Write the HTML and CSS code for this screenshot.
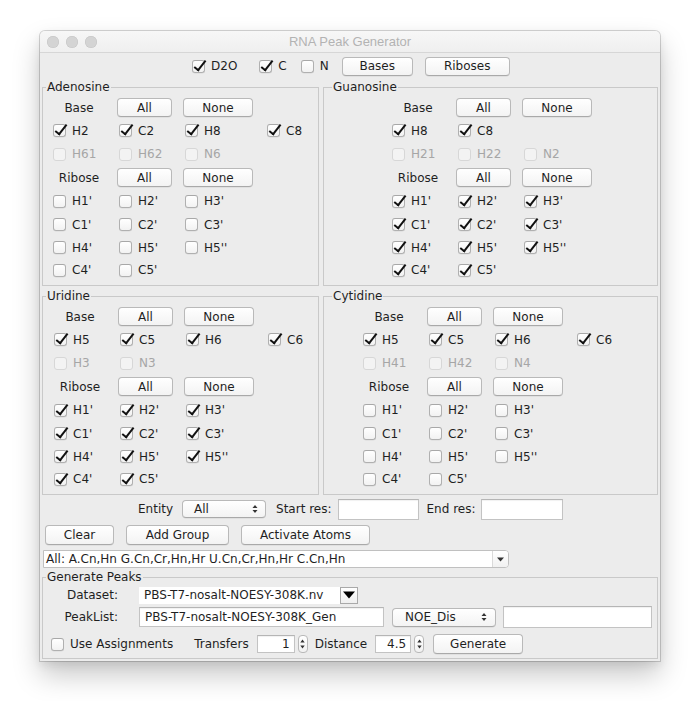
FILE: index.html
```html
<!DOCTYPE html>
<html>
<head>
<meta charset="utf-8">
<title>RNA Peak Generator</title>
<link rel="stylesheet" href="styles.css">
</head>
<body>
<div class="stage">
<div class="window">
  <div class="titlebar">
    <div class="lights"><span class="light"></span><span class="light"></span><span class="light"></span></div>
    <div class="title">RNA Peak Generator</div>
    <div></div>
  </div>
  <div class="content">
    <div class="toprow">
      <label class="chk d2o"><span class="cb on"></span>D2O</label>
      <label class="chk copt"><span class="cb on"></span>C</label>
      <label class="chk nopt"><span class="cb"></span>N</label>
      <button class="btn bases">Bases</button>
      <button class="btn riboses">Riboses</button>
    </div>

    <div class="panels">
      <fieldset class="panel">
        <legend>Adenosine</legend>
        <div class="grid pad-a">
          <div class="row"><span class="lbl">Base</span><button class="btn all">All</button><button class="btn none">None</button></div>
          <div class="row"><label class="chk"><span class="cb on"></span>H2</label><label class="chk"><span class="cb on"></span>C2</label><label class="chk"><span class="cb on"></span>H8</label><label class="chk"><span class="cb on"></span>C8</label></div>
          <div class="row"><label class="chk dis"><span class="cb"></span>H61</label><label class="chk dis"><span class="cb"></span>H62</label><label class="chk dis"><span class="cb"></span>N6</label></div>
          <div class="row"><span class="lbl">Ribose</span><button class="btn all">All</button><button class="btn none">None</button></div>
          <div class="row"><label class="chk"><span class="cb"></span>H1'</label><label class="chk"><span class="cb"></span>H2'</label><label class="chk"><span class="cb"></span>H3'</label></div>
          <div class="row"><label class="chk"><span class="cb"></span>C1'</label><label class="chk"><span class="cb"></span>C2'</label><label class="chk"><span class="cb"></span>C3'</label></div>
          <div class="row"><label class="chk"><span class="cb"></span>H4'</label><label class="chk"><span class="cb"></span>H5'</label><label class="chk"><span class="cb"></span>H5''</label></div>
          <div class="row"><label class="chk"><span class="cb"></span>C4'</label><label class="chk"><span class="cb"></span>C5'</label></div>
        </div>
      </fieldset>

      <fieldset class="panel right">
        <legend>Guanosine</legend>
        <div class="grid pad-g">
          <div class="row"><span class="lbl">Base</span><button class="btn all">All</button><button class="btn none">None</button></div>
          <div class="row"><label class="chk"><span class="cb on"></span>H8</label><label class="chk"><span class="cb on"></span>C8</label></div>
          <div class="row"><label class="chk dis"><span class="cb"></span>H21</label><label class="chk dis"><span class="cb"></span>H22</label><label class="chk dis"><span class="cb"></span>N2</label></div>
          <div class="row"><span class="lbl">Ribose</span><button class="btn all">All</button><button class="btn none">None</button></div>
          <div class="row"><label class="chk"><span class="cb on"></span>H1'</label><label class="chk"><span class="cb on"></span>H2'</label><label class="chk"><span class="cb on"></span>H3'</label></div>
          <div class="row"><label class="chk"><span class="cb on"></span>C1'</label><label class="chk"><span class="cb on"></span>C2'</label><label class="chk"><span class="cb on"></span>C3'</label></div>
          <div class="row"><label class="chk"><span class="cb on"></span>H4'</label><label class="chk"><span class="cb on"></span>H5'</label><label class="chk"><span class="cb on"></span>H5''</label></div>
          <div class="row"><label class="chk"><span class="cb on"></span>C4'</label><label class="chk"><span class="cb on"></span>C5'</label></div>
        </div>
      </fieldset>

      <fieldset class="panel">
        <legend>Uridine</legend>
        <div class="grid pad-u">
          <div class="row"><span class="lbl">Base</span><button class="btn all">All</button><button class="btn none">None</button></div>
          <div class="row"><label class="chk"><span class="cb on"></span>H5</label><label class="chk"><span class="cb on"></span>C5</label><label class="chk"><span class="cb on"></span>H6</label><label class="chk"><span class="cb on"></span>C6</label></div>
          <div class="row"><label class="chk dis"><span class="cb"></span>H3</label><label class="chk dis"><span class="cb"></span>N3</label></div>
          <div class="row"><span class="lbl">Ribose</span><button class="btn all">All</button><button class="btn none">None</button></div>
          <div class="row"><label class="chk"><span class="cb on"></span>H1'</label><label class="chk"><span class="cb on"></span>H2'</label><label class="chk"><span class="cb on"></span>H3'</label></div>
          <div class="row"><label class="chk"><span class="cb on"></span>C1'</label><label class="chk"><span class="cb on"></span>C2'</label><label class="chk"><span class="cb on"></span>C3'</label></div>
          <div class="row"><label class="chk"><span class="cb on"></span>H4'</label><label class="chk"><span class="cb on"></span>H5'</label><label class="chk"><span class="cb on"></span>H5''</label></div>
          <div class="row"><label class="chk"><span class="cb on"></span>C4'</label><label class="chk"><span class="cb on"></span>C5'</label></div>
        </div>
      </fieldset>

      <fieldset class="panel right">
        <legend>Cytidine</legend>
        <div class="grid pad-c">
          <div class="row"><span class="lbl">Base</span><button class="btn all">All</button><button class="btn none">None</button></div>
          <div class="row"><label class="chk"><span class="cb on"></span>H5</label><label class="chk"><span class="cb on"></span>C5</label><label class="chk"><span class="cb on"></span>H6</label><label class="chk"><span class="cb on"></span>C6</label></div>
          <div class="row"><label class="chk dis"><span class="cb"></span>H41</label><label class="chk dis"><span class="cb"></span>H42</label><label class="chk dis"><span class="cb"></span>N4</label></div>
          <div class="row"><span class="lbl">Ribose</span><button class="btn all">All</button><button class="btn none">None</button></div>
          <div class="row"><label class="chk"><span class="cb"></span>H1'</label><label class="chk"><span class="cb"></span>H2'</label><label class="chk"><span class="cb"></span>H3'</label></div>
          <div class="row"><label class="chk"><span class="cb"></span>C1'</label><label class="chk"><span class="cb"></span>C2'</label><label class="chk"><span class="cb"></span>C3'</label></div>
          <div class="row"><label class="chk"><span class="cb"></span>H4'</label><label class="chk"><span class="cb"></span>H5'</label><label class="chk"><span class="cb"></span>H5''</label></div>
          <div class="row"><label class="chk"><span class="cb"></span>C4'</label><label class="chk"><span class="cb"></span>C5'</label></div>
        </div>
      </fieldset>
    </div>

    <div class="entityrow">
      <span>Entity</span>
      <div class="popup entity"><span>All</span><svg class="updown" width="6" height="10" viewBox="0 0 6 10"><path d="M0.5 4 L3 1 L5.5 4 Z M0.5 6 L3 9 L5.5 6 Z" fill="#333"/></svg></div>
      <span class="startlbl">Start res:</span>
      <div class="field res start"></div>
      <span class="endlbl">End res:</span>
      <div class="field res end"></div>
    </div>

    <div class="btnrow">
      <button class="btn clear">Clear</button>
      <button class="btn addgroup">Add Group</button>
      <button class="btn activate">Activate Atoms</button>
    </div>

    <div class="combo">
      <span class="combo-text">All: A.Cn,Hn G.Cn,Cr,Hn,Hr U.Cn,Cr,Hn,Hr C.Cn,Hn</span>
      <span class="combo-arrow"><svg width="7" height="5" viewBox="0 0 7 5"><path d="M0 0.5 L7 0.5 L3.5 4.5 Z" fill="#333"/></svg></span>
    </div>

    <fieldset class="gen">
      <legend>Generate Peaks</legend>
      <div class="genrow r1">
        <span class="glabel">Dataset:</span>
        <div class="dsfield">PBS-T7-nosalt-NOESY-308K.nv</div>
        <span class="dsarrow"><svg width="12" height="8" viewBox="0 0 12 8"><path d="M0 0.5 L12 0.5 L6 7.5 Z" fill="#000"/></svg></span>
      </div>
      <div class="genrow r2">
        <span class="glabel">PeakList:</span>
        <div class="field peaklist">PBS-T7-nosalt-NOESY-308K_Gen</div>
        <div class="popup noe"><span>NOE_Dis</span><svg class="updown" width="6" height="10" viewBox="0 0 6 10"><path d="M0.5 4 L3 1 L5.5 4 Z M0.5 6 L3 9 L5.5 6 Z" fill="#333"/></svg></div>
        <div class="field extra"></div>
      </div>
      <div class="genrow r3">
        <label class="chk"><span class="cb"></span>Use Assignments</label>
        <span class="transfers">Transfers</span>
        <div class="field spin transfersval">1</div>
        <span class="stepper"><svg width="5" height="12" viewBox="0 0 5 12"><path d="M0.3 4.5 L2.5 1.5 L4.7 4.5 Z M0.3 7.5 L2.5 10.5 L4.7 7.5 Z" fill="#333"/></svg></span>
        <span class="distance">Distance</span>
        <div class="field spin distval">4.5</div>
        <span class="stepper"><svg width="5" height="12" viewBox="0 0 5 12"><path d="M0.3 4.5 L2.5 1.5 L4.7 4.5 Z M0.3 7.5 L2.5 10.5 L4.7 7.5 Z" fill="#333"/></svg></span>
        <button class="btn generate">Generate</button>
      </div>
    </fieldset>
  </div>
</div>
</div>
</body>
</html>
```

FILE: styles.css
```css
* { box-sizing: border-box; }

html, body {
  margin: 0;
  background: #ffffff;
}

body {
  font-family: "DejaVu Sans", "Liberation Sans", sans-serif;
  font-size: 12px;
  color: #1f1f1f;
}

.stage {
  padding: 31px 40px 40px 40px;
}

.window {
  width: 620px;
  height: 630px;
  background: #ececec;
  border-radius: 5px 5px 0 0;
  box-shadow: 0 0 0 1px rgba(0,0,0,0.16), 0 14px 28px rgba(0,0,0,0.22), 0 4px 10px rgba(0,0,0,0.08);
  overflow: hidden;
}

/* Title bar */
.titlebar {
  height: 22px;
  display: grid;
  grid-template-columns: 1fr auto 1fr;
  align-items: center;
  background: linear-gradient(#f7f7f7, #efefef);
  border-bottom: 1px solid #d6d6d6;
}

.lights {
  display: flex;
  gap: 7px;
  padding-left: 7px;
}

.light {
  width: 12px;
  height: 12px;
  border-radius: 50%;
  background: #d4d4d4;
  box-shadow: inset 0 0 0 0.5px #c4c4c4;
}

.title {
  font-family: "Liberation Sans", "Helvetica", sans-serif;
  font-size: 13px;
  color: #b3b3b3;
}

.content {
  padding: 0 2px;
}

/* Top row */
.toprow {
  height: 26px;
  display: flex;
  align-items: center;
  padding-left: 150px;
}

.toprow .copt { margin-left: 22px; }
.toprow .nopt { margin-left: 14px; }
.toprow .bases { margin-left: 13px; }
.toprow .riboses { margin-left: 12px; }

/* Checkboxes */
.chk {
  display: inline-flex;
  align-items: center;
  gap: 6px;
  white-space: nowrap;
  line-height: 16px;
}

.cb {
  position: relative;
  width: 13px;
  height: 13px;
  flex: none;
  border-radius: 3px;
  border: 1px solid #b0b0b0;
  border-top-color: #a8a8a8;
  background: linear-gradient(#ffffff, #f2f2f2);
  box-shadow: 0 0.5px 0.5px rgba(0,0,0,0.08);
}

.cb.on::after {
  content: "";
  position: absolute;
  left: 4px;
  top: -3px;
  width: 4px;
  height: 11px;
  border: solid #111;
  border-width: 0 2.4px 2.4px 0;
  transform: rotate(38deg);
  transform-origin: 50% 50%;
}

.chk.dis { color: #a6a6a6; }
.chk.dis .cb {
  border-color: #d7d7d7;
  background: #f3f3f3;
  box-shadow: none;
}

/* Buttons */
.btn {
  font-family: inherit;
  font-size: 12px;
  color: #1f1f1f;
  height: 19px;
  padding: 0;
  border: 1px solid #b9b9b9;
  border-bottom-color: #a9a9a9;
  border-radius: 4px;
  background: linear-gradient(#ffffff, #f3f3f3);
  box-shadow: 0 0.5px 0.5px rgba(0,0,0,0.1);
  line-height: 16px;
}

.bases { width: 71px; }
.riboses { width: 85px; }

/* Panels */
.panels {
  display: grid;
  grid-template-columns: 277px 335px;
  column-gap: 4px;
  row-gap: 2px;
}

.panel, .gen {
  margin: 0;
  padding: 1px 0 4px 0;
  border: 1px solid #c9c9c9;
  min-width: 0;
}

.panel legend, .gen legend {
  padding: 0 1px;
  margin-left: 3px;
  line-height: 16px;
  font-size: 12px;
}

.panel.right legend { margin-left: 8px; }

.grid.pad-a { padding-left: 10px; }
.grid.pad-g { padding-left: 68px; }
.grid.pad-u { padding-left: 11px; }
.grid.pad-c { padding-left: 39px; }

.row {
  display: grid;
  grid-template-columns: 66px 66px 82px auto;
  height: 23px;
  align-items: center;
}

.row:nth-child(3),
.row:nth-child(5) { height: 24px; }
.row:nth-child(8) { height: 22px; }

.lbl {
  width: 52px;
  text-align: center;
}

.row .btn { margin-left: -2px; }
.all { width: 55px; }
.none { width: 70px; }

/* Entity row */
.entityrow {
  margin-top: 1px;
  height: 26px;
  display: flex;
  align-items: center;
  padding-left: 96px;
}

.popup {
  height: 18px;
  display: flex;
  align-items: center;
  justify-content: space-between;
  border: 1px solid #b9b9b9;
  border-bottom-color: #a9a9a9;
  border-radius: 4px;
  background: linear-gradient(#ffffff, #f3f3f3);
  box-shadow: 0 0.5px 0.5px rgba(0,0,0,0.1);
}

.popup.entity {
  width: 84px;
  margin-left: 9px;
  padding: 0 7px 0 11px;
}

.startlbl { margin-left: 10px; }
.field.res.start { margin-left: 6px; width: 81px; }
.endlbl { margin-left: 8px; }
.field.res.end { margin-left: 5px; width: 82px; }

.field {
  background: #ffffff;
  border: 1px solid #c3c3c3;
  border-top-color: #b5b5b5;
  box-shadow: inset 0 1px 1px rgba(0,0,0,0.06);
  height: 21px;
  line-height: 19px;
}

/* Buttons row */
.btnrow {
  margin-top: 3px;
  height: 20px;
  display: flex;
  gap: 12px;
  padding-left: 3px;
}

.btnrow .btn { height: 20px; }
.clear { width: 69px; }
.addgroup { width: 103px; }
.activate { width: 129px; }

/* Combo */
.combo {
  margin-top: 5px;
  margin-left: 1px;
  width: 466px;
  height: 18px;
  display: flex;
  align-items: center;
  background: #ffffff;
  border: 1px solid #c0c0c0;
  border-radius: 0 4px 4px 0;
}

.combo-text {
  flex: 1;
  padding-left: 2px;
  white-space: nowrap;
  overflow: hidden;
}

.combo-arrow {
  width: 16px;
  height: 16px;
  display: flex;
  align-items: center;
  justify-content: center;
  background: linear-gradient(#ffffff, #f1f1f1);
  border-left: 1px solid #dadada;
  border-radius: 0 3px 3px 0;
}

/* Generate peaks */
.gen {
  margin-top: 1px;
  padding: 0 0 4px 0;
}

.genrow {
  display: flex;
  align-items: center;
}

.genrow.r1 { margin-top: 1px; height: 18px; }
.genrow.r2 { margin-top: 3px; height: 20px; }
.genrow.r3 { margin-top: 7px; height: 20px; padding-left: 8px; }

.glabel {
  width: 75px;
  text-align: right;
  margin-right: 21px;
}

.dsfield {
  width: 201px;
  height: 17px;
  line-height: 17px;
  background: #ffffff;
  padding-left: 5px;
  white-space: nowrap;
}

.dsarrow {
  width: 18px;
  height: 17px;
  display: flex;
  align-items: center;
  justify-content: center;
  background: linear-gradient(#ffffff, #efefef);
  border: 1px solid #a9a9a9;
}

.field.peaklist {
  width: 245px;
  height: 20px;
  line-height: 18px;
  padding-left: 5px;
  white-space: nowrap;
}

.popup.noe {
  width: 104px;
  height: 19px;
  margin-left: 8px;
  padding: 0 8px 0 12px;
}

.field.extra {
  width: 149px;
  height: 22px;
  margin-left: 7px;
}

.transfers { margin-left: 21px; }

.field.spin {
  height: 18px;
  line-height: 16px;
  text-align: right;
  padding-right: 4px;
}

.transfersval { width: 38px; margin-left: 8px; }
.distval { width: 36px; margin-left: 8px; }

.stepper {
  width: 10px;
  height: 18px;
  margin-left: 3px;
  display: flex;
  align-items: center;
  justify-content: center;
  border: 1px solid #b9b9b9;
  border-radius: 4px;
  background: linear-gradient(#ffffff, #f1f1f1);
}

.distance { margin-left: 7px; }

.generate {
  width: 90px;
  height: 20px;
  margin-left: 9px;
}
```
